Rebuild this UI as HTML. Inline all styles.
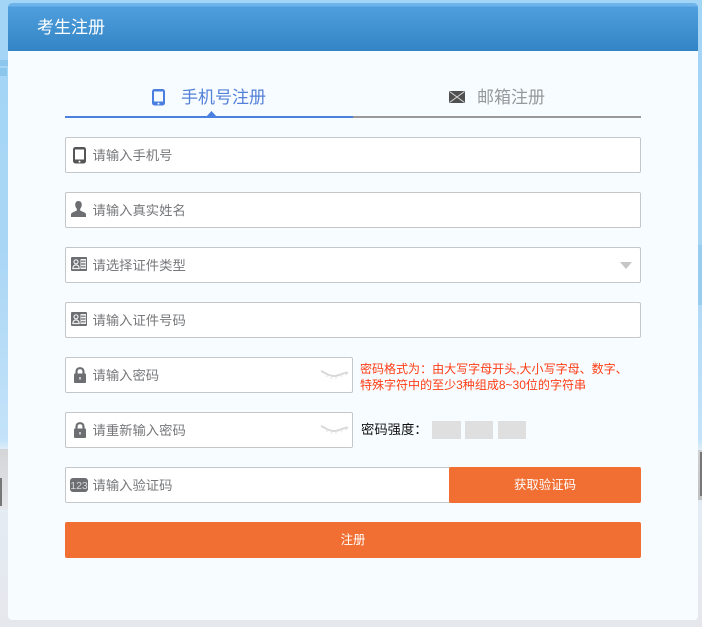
<!DOCTYPE html>
<html lang="zh"><head><meta charset="utf-8"><title>考生注册</title>
<style>
*{box-sizing:border-box;margin:0;padding:0}
html,body{width:702px;height:627px;overflow:hidden}
body{position:relative;font-family:"Liberation Sans","Noto Sans CJK SC",sans-serif;background:linear-gradient(#a2d5f6 0,#aad6f5 250px,#c4e3f9 440px,#e2eef8 450px,#e6e7ec 627px)}
.abs{position:absolute}
.panel{position:absolute;left:8px;top:3px;width:690px;height:617px;background:#f6fcff;border-radius:4px;overflow:hidden}
.head{position:absolute;left:0;top:0;width:690px;height:48px;background:linear-gradient(#6db4ea 0,#6db4ea 3px,#4f9fde 4px,#3384c4 48px);color:#fff;font-size:17px;line-height:49px;padding-left:29px}
.tab{position:absolute;font-size:17px;line-height:20px;white-space:nowrap}
.inp{position:absolute;height:36px;background:#fff;border:1px solid #c4c6c8;border-radius:2px;color:#77787b;font-size:13.33px;line-height:35px;padding-left:26.500px;white-space:nowrap}
.btn{position:absolute;background:#f26f33;border-radius:2px;color:#fff;font-size:12.400px;text-align:center;line-height:36px}
svg{position:absolute;display:block}
.sq{position:absolute;top:421px;height:18px;background:#dfdfdf}
</style></head><body>
<div class="abs" style="left:0;top:60px;width:8px;height:6px;background:#8cc6ec"></div>
<div class="abs" style="left:0;top:68px;width:7px;height:8px;background:#8cc6ec"></div>
<div class="abs" style="left:698px;top:245px;width:4px;height:60px;background:#98cdf0"></div>
<div class="abs" style="left:0;top:449px;width:8px;height:60px;background:linear-gradient(#d4d5d7,#dcdde0 30px,#e6e7ea)"></div>
<div class="abs" style="left:0;top:478px;width:2px;height:28px;background:#777"></div>
<div class="abs" style="left:698px;top:450px;width:4px;height:50px;background:linear-gradient(#d0d1d3,#c0c1c3)"></div>
<div class="abs" style="left:700px;top:452px;width:2px;height:44px;background:#777"></div>
<div class="panel"><div class="head">考生注册</div></div>

<svg style="left:152px;top:89px" width="13" height="17" viewBox="0 0 13 17"><rect width="13" height="16.500" rx="2.500" fill="#4a7fe0"/><rect x="2" y="2.500" width="9" height="10" fill="#f6fcff"/><circle cx="6.500" cy="14.600" r="1" fill="#f6fcff"/></svg>
<div class="tab" style="left:181px;top:88px;color:#5580d8">手机号注册</div>
<svg style="left:449px;top:91px" width="16" height="12" viewBox="0 0 16 12"><rect width="16" height="12" fill="#505050"/><path d="M.5 .5L15.500 11.500M15.500 .5L.5 11.500" fill="none" stroke="#d8dadb" stroke-width="1"/></svg>
<div class="tab" style="left:477px;top:88px;color:#96999b">邮箱注册</div>
<div class="abs" style="left:65px;top:116px;width:288px;height:2px;background:#4a80e0"></div>
<div class="abs" style="left:353px;top:116px;width:288px;height:2px;background:#999"></div>
<svg style="left:206px;top:111px" width="11" height="6" viewBox="0 0 11 6"><path d="M0 6L5.500 0L11 6Z" fill="#4a80e0"/></svg>

<div class="inp" style="left:65px;top:137px;width:576px">请输入手机号</div>
<svg style="left:73px;top:147px" width="13" height="17" viewBox="0 0 13 17"><rect width="13" height="16.500" rx="2.500" fill="#555558"/><rect x="2" y="2.500" width="9" height="10" fill="#fff"/><circle cx="6.500" cy="14.600" r="1" fill="#fff"/></svg>

<div class="inp" style="left:65px;top:192px;width:576px">请输入真实姓名</div>
<svg style="left:71px;top:201px" width="15" height="16" viewBox="0 0 15 16"><path d="M7.500 0C5.200 0 4.200 1.800 4.200 3.800C4.200 5.600 5 7 5.800 7.800V9.500C4 10.600.7 11.200 0 13V16H15V13C14.300 11.200 11 10.600 9.200 9.500V7.800C10 7 10.800 5.600 10.800 3.800C10.800 1.800 9.800 0 7.500 0Z" fill="#6d6e72"/></svg>

<div class="inp" style="left:65px;top:247px;width:576px">请选择证件类型</div>
<svg style="left:71px;top:257px" width="16" height="14" viewBox="0 0 16 14"><rect width="16" height="14" rx="1" fill="#6d6e72"/><circle cx="5" cy="4.800" r="2" fill="none" stroke="#eee" stroke-width="1.200"/><path d="M1.800 11.500C2 9 3.500 8 5 8S8 9 8.200 11.500Z" fill="none" stroke="#eee" stroke-width="1.200"/><rect x="9.500" y="2" width="5.500" height="10" fill="#eee"/><path d="M10 4.200H14.500M10 7H14.500M10 9.800H14.500" stroke="#6d6e72" stroke-width="1.200"/></svg>
<svg style="left:620px;top:262px" width="12" height="7" viewBox="0 0 12 7"><path d="M0 0H12L6 7Z" fill="#c4c6c8"/></svg>

<div class="inp" style="left:65px;top:302px;width:576px">请输入证件号码</div>
<svg style="left:71px;top:312px" width="16" height="14" viewBox="0 0 16 14"><rect width="16" height="14" rx="1" fill="#6d6e72"/><circle cx="5" cy="4.800" r="2" fill="none" stroke="#eee" stroke-width="1.200"/><path d="M1.800 11.500C2 9 3.500 8 5 8S8 9 8.200 11.500Z" fill="none" stroke="#eee" stroke-width="1.200"/><rect x="9.500" y="2" width="5.500" height="10" fill="#eee"/><path d="M10 4.200H14.500M10 7H14.500M10 9.800H14.500" stroke="#6d6e72" stroke-width="1.200"/></svg>

<div class="inp" style="left:65px;top:357px;width:288px">请输入密码</div>
<svg style="left:74px;top:367px" width="12" height="16" viewBox="0 0 12 16"><path d="M2.500 7V4.500C2.500 2.500 4 1.200 6 1.200S9.500 2.500 9.500 4.500V7" fill="none" stroke="#6d6e72" stroke-width="2.200"/><rect y="6.500" width="12" height="9.500" rx="1" fill="#6d6e72"/><rect x="5.200" y="10" width="1.600" height="2.500" fill="#ddd"/></svg>
<svg style="left:320px;top:369px" width="29" height="12" viewBox="0 0 29 12"><path d="M1 2C5 3.500 8 7 14 7C19 7 22 4 28 3.500" fill="none" stroke="#d8d8d8" stroke-width="2"/><path d="M8 6L6 8M12 7L11 10M16 7L16 10M20 5L22 8M24 4L27 6" stroke="#e4e4e4" stroke-width="1"/></svg>
<div class="abs" style="left:360px;top:361px;width:281px;font-size:12.030px;line-height:16px;color:#ff3c14">密码格式为：由大写字母开头,大小写字母、数字、<br>特殊字符中的至少3种组成8~30位的字符串</div>

<div class="inp" style="left:65px;top:412px;width:288px">请重新输入密码</div>
<svg style="left:74px;top:422px" width="12" height="16" viewBox="0 0 12 16"><path d="M2.500 7V4.500C2.500 2.500 4 1.200 6 1.200S9.500 2.500 9.500 4.500V7" fill="none" stroke="#6d6e72" stroke-width="2.200"/><rect y="6.500" width="12" height="9.500" rx="1" fill="#6d6e72"/><rect x="5.200" y="10" width="1.600" height="2.500" fill="#ddd"/></svg>
<svg style="left:320px;top:424px" width="29" height="12" viewBox="0 0 29 12"><path d="M1 2C5 3.500 8 7 14 7C19 7 22 4 28 3.500" fill="none" stroke="#d8d8d8" stroke-width="2"/><path d="M8 6L6 8M12 7L11 10M16 7L16 10M20 5L22 8M24 4L27 6" stroke="#e4e4e4" stroke-width="1"/></svg>
<div class="abs" style="left:361px;top:421px;font-size:13.33px;line-height:18px;color:#111;white-space:nowrap">密码强度：</div>
<div class="sq" style="left:432px;width:29px"></div>
<div class="sq" style="left:465px;width:28px"></div>
<div class="sq" style="left:498px;width:28px"></div>

<div class="inp" style="left:65px;top:467px;width:385px;border-radius:2px 0 0 2px">请输入验证码</div>
<svg style="left:70px;top:478px" width="18" height="14" viewBox="0 0 18 14"><rect width="18" height="14" rx="3" fill="#6d6e72"/><text x="9" y="11" font-size="10.500" fill="#d8d8da" text-anchor="middle" font-family="Liberation Sans">123</text></svg>
<div class="btn" style="left:449px;top:467px;width:192px;height:36px">获取验证码</div>
<div class="btn" style="left:65px;top:522px;width:576px;height:36px">注册</div>
</body></html>
